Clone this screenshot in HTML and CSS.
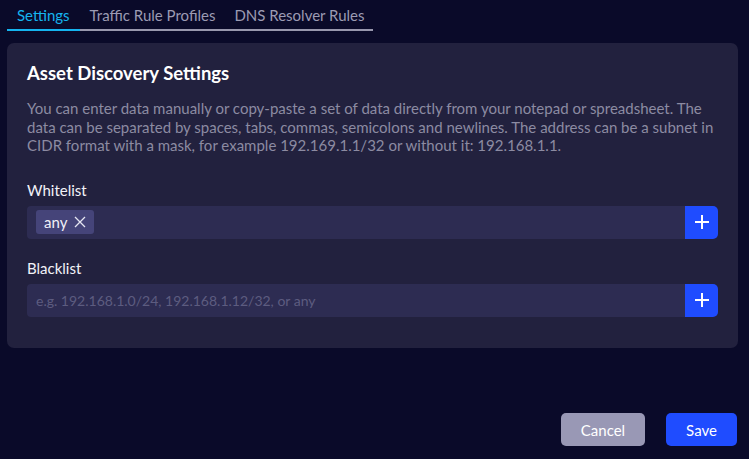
FILE: index.html
```html
<!DOCTYPE html>
<html>
<head>
<meta charset="utf-8">
<link rel="stylesheet" href="styles.css">
</head>
<body>
<div class="page">
  <nav class="tabs">
    <div class="tab active">Settings</div>
    <div class="tab">Traffic Rule Profiles</div>
    <div class="tab last">DNS Resolver Rules</div>
  </nav>
  <section class="card">
    <h2 class="title">Asset Discovery Settings</h2>
    <p class="desc">You can enter data manually or copy-paste a set of data directly from your notepad or spreadsheet. The data can be separated by spaces, tabs, commas, semicolons and newlines. The address can be a subnet in CIDR format with a mask, for example 192.169.1.1/32 or without it: 192.168.1.1.</p>
    <div class="field">
      <label class="label">Whitelist</label>
      <div class="inputrow">
        <div class="input">
          <span class="chip">any
            <svg class="chip-x" width="12" height="12" viewBox="0 0 12 12"><path d="M1 1L11 11M11 1L1 11" stroke="#e6e6f2" stroke-width="1.3" fill="none"/></svg>
          </span>
        </div>
        <button class="add"><svg width="16" height="16" viewBox="0 0 16 16"><path d="M8 1V15M1 8H15" stroke="#fff" stroke-width="2" fill="none"/></svg></button>
      </div>
    </div>
    <div class="field">
      <label class="label">Blacklist</label>
      <div class="inputrow">
        <div class="input"><span class="placeholder">e.g. 192.168.1.0/24, 192.168.1.12/32, or any</span></div>
        <button class="add"><svg width="16" height="16" viewBox="0 0 16 16"><path d="M8 1V15M1 8H15" stroke="#fff" stroke-width="2" fill="none"/></svg></button>
      </div>
    </div>
  </section>
  <footer class="actions">
    <button class="btn cancel">Cancel</button>
    <button class="btn save">Save</button>
  </footer>
</div>
</body>
</html>
```
FILE: styles.css
```css
* { box-sizing: border-box; }
html, body { margin: 0; padding: 0; }
body {
  background: #0a0a29;
  font-family: Lato, "Open Sans", sans-serif;
  color: #fff;
  width: 749px;
  height: 459px;
  overflow: hidden;
}
.page {
  padding: 0 11px 0 7px;
  display: flex;
  flex-direction: column;
}
.tabs {
  display: flex;
  align-self: flex-start;
  border-bottom: 2px solid #9897ad;
  height: 31px;
}
.tab {
  font-size: 15px;
  color: #9c9bb3;
  padding: 6px 10px 0 10px;
  height: 29px;
}
.tab.last { padding-left: 9px; padding-right: 8px; }
.tab.active {
  color: #15b4ef;
  border-bottom: 2px solid #15b4ef;
  height: 31px;
  margin-bottom: -2px;
}
.card {
  margin-top: 12px;
  background: #22213e;
  border-radius: 7px;
  padding: 20px 20px 30px 20px;
  height: 305px;
}
.title {
  margin: 0;
  font-size: 18.5px;
  font-weight: 700;
  line-height: 20px;
}
.desc {
  margin: 16px 0 0 0;
  font-size: 15px;
  line-height: 18.5px;
  color: #8c8ba2;
}
.field { margin-top: 25px; }
.field + .field { margin-top: 19px; }
.label {
  display: block;
  font-size: 15px;
  line-height: 20px;
  color: #f2f2f8;
  margin-bottom: 6px;
}
.inputrow {
  display: flex;
  height: 33px;
}
.input {
  flex: 1;
  background: #2d2c52;
  border-radius: 4px 0 0 4px;
  display: flex;
  align-items: center;
  padding: 0 9px;
}
.chip {
  display: inline-flex;
  align-items: center;
  gap: 7px;
  background: #454479;
  border-radius: 3px;
  height: 24px;
  padding: 0 8px;
  font-size: 15px;
  color: #f0f0f8;
}
.placeholder {
  font-size: 14px;
  color: #5d5c80;
}
.add {
  width: 33px;
  border: 0;
  background: #1f4cff;
  border-radius: 0 5px 5px 0;
  display: flex;
  align-items: center;
  justify-content: center;
  padding: 0;
}
.actions {
  display: flex;
  justify-content: flex-end;
  gap: 21px;
  margin-top: 65px;
  margin-right: 1px;
}
.btn {
  height: 33px;
  border: 0;
  border-radius: 5px;
  font-family: inherit;
  font-size: 15px;
  color: #fff;
}
.cancel { width: 84px; background: #9998b5; }
.save { width: 71px; background: #1f4cff; }
```
